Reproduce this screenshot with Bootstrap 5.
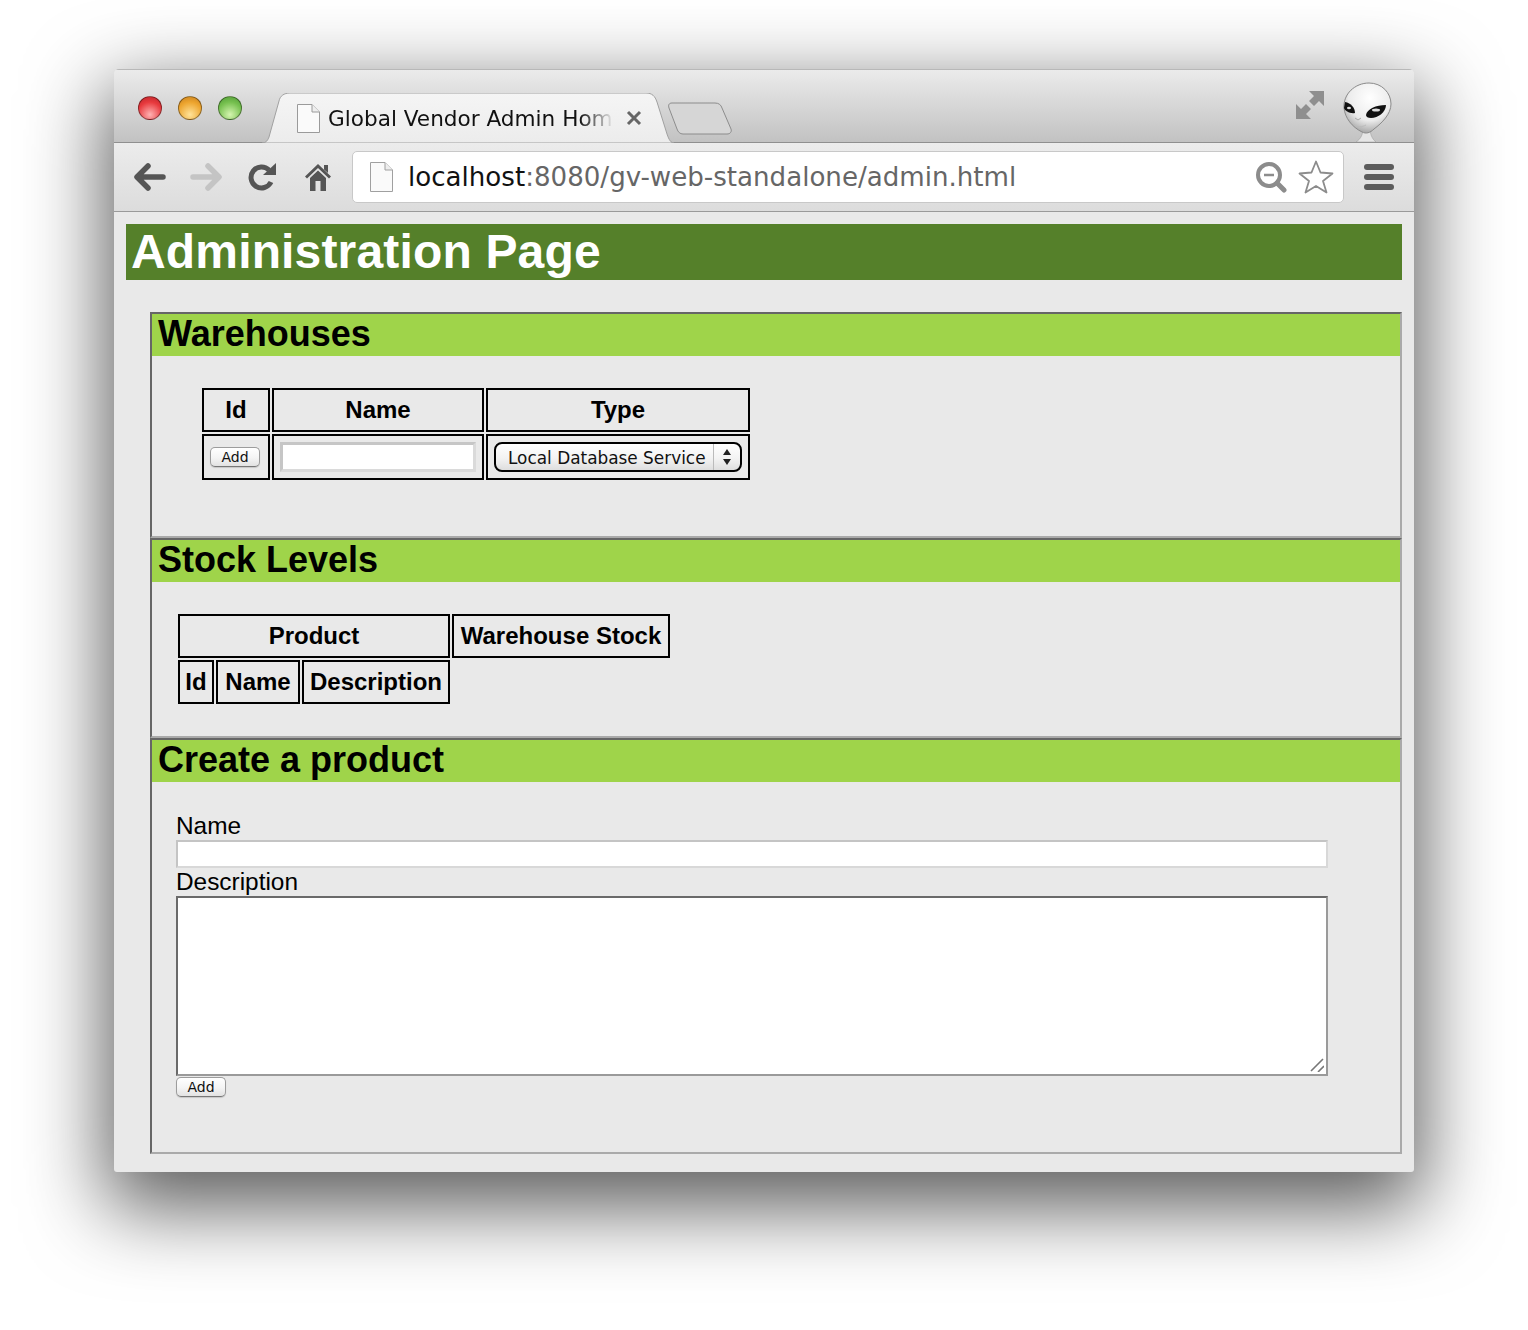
<!DOCTYPE html>
<html>
<head>
  <title>Administration Page</title>
  <meta charset="UTF-8">
  <link href="https://cdn.jsdelivr.net/npm/bootstrap@5.3.0/dist/css/bootstrap.min.css" rel="stylesheet">
  <style>
    body { background: #fff; margin: 0; height: 1330px; overflow: hidden; font-family: "Liberation Sans", Arial, sans-serif; color: #000; }
    .win { width: 1300px; height: 1103px; margin: 69px 0 0 114px; background: #e9e9e9; border-radius: 5px 5px 3px 3px; box-shadow: 0 28px 80px 8px rgba(0,0,0,.64); overflow: hidden; }
    .chrome-top { height: 74px; padding-left: 24px; background: linear-gradient(#ebebeb, #c2c2c2); border-top: 1px solid #b8b8b8; border-bottom: 1px solid #8f8f8f; }
    .dot { width: 24px; height: 24px; border-radius: 50%; margin: 26px 16px 0 0; border: 1px solid rgba(0,0,0,.4); }
    .dot-r { background: radial-gradient(circle at 50% 80%, #ffb3b3, #e83a3e 60%, #b92328); }
    .dot-y { background: radial-gradient(circle at 50% 80%, #ffe39a, #eda52f 60%, #c77f1d); }
    .dot-g { background: radial-gradient(circle at 50% 80%, #d5f5b0, #76c04f 60%, #4f9a35); }
    .tab-wrap { width: 412px; height: 50px; margin: 23px 0 0 4px; }
    .tab-shape { left: 0; top: 0; }
    .tab-inner { padding-left: 35px; height: 50px; }
    .tab-title { width: 286px; margin-left: 8px; overflow: hidden; white-space: nowrap; font: 21.6px "DejaVu Sans", sans-serif; color: #111; -webkit-mask-image: linear-gradient(to right, #000 88%, transparent 100%); mask-image: linear-gradient(to right, #000 88%, transparent 100%); }
    .tab-x { margin-left: 12px; }
    .newtab { margin: 32px 0 0 -7px; }
    .top-right { margin-left: auto; padding-right: 21px; }
    .resize-ico { margin: 21px 19px 0 0; }
    .alien { margin-top: 12px; }
    .chrome-bar { height: 69px; padding-left: 8px; background: linear-gradient(#ececec, #dcdcdc); border-bottom: 1px solid #9a9a9a; }
    .tool-slot { width: 56px; }
    .addr { width: 992px; height: 52px; margin-left: 6px; background: #fff; border: 1px solid #c8c8c8; border-radius: 5px; padding: 0 9px 0 17px; }
    .addr-url { font: 26.1px "DejaVu Sans", sans-serif; margin-left: 15px; color: #666; white-space: nowrap; }
    .addr-url b { font-weight: normal; color: #111; }
    .star-ico { margin-left: 11px; }
    .menu-ico { margin-left: 20px; }
    .page { padding: 12px 12px 0; }
    .page-head { height: 56px; margin: 0 0 32px; padding-left: 5px; background: #55802a; color: #fff; letter-spacing: .16px; font: bold 48px/56px "Liberation Sans", Arial, sans-serif; }
    .block { margin-left: 24px; border: 2px solid; border-color: #666 #aaa #aaa #666; }
    .block-head { height: 42px; margin: 0; padding-left: 6px; background: #9fd44a; font: bold 36px/40px "Liberation Sans", Arial, sans-serif; }
    .wh-body { height: 180px; padding: 30px 0 0 48px; }
    .st-body { height: 154px; padding: 30px 0 0 24px; }
    .cr-body { height: 370px; padding: 30px 0 0 24px; }
    .grid-tbl { border-collapse: separate; border-spacing: 2px; table-layout: fixed; }
    .grid-tbl th, .grid-tbl td { border: 2px solid #000; text-align: center; font: bold 24px "Liberation Sans", Arial, sans-serif; padding: 0; height: 44px; }
    .grid-tbl td { height: 46px; }
    .c68 { width: 68px; } .c212 { width: 212px; } .c264 { width: 264px; }
    .c36 { width: 36px; } .c84 { width: 84px; } .c148 { width: 148px; } .c218 { width: 218px; }
    .mac-btn { display: block; width: 50px; height: 20px; padding: 0 0 1px; background: linear-gradient(#fff, #f4f4f4 55%, #e2e2e2); border: 1px solid #9c9c9c; border-bottom-color: #777; border-radius: 5px; font: 14px/18px "DejaVu Sans", sans-serif; color: #111; box-shadow: 0 1px 1px rgba(0,0,0,.15); }
    .wh-btn { margin: 0 0 0 6px; }
    .wh-input { display: block; width: 196px; height: 30px; margin: 0 auto; padding: 0 3px; background: #fff; border: 3px solid #d2d2d2; border-color: #c6c6c6 #dadada #dadada #c6c6c6; }
    .sel-box { width: 248px; height: 30px; margin: 0 auto; }
    .sel-real { display: block; width: 248px; height: 30px; padding: 1px 0 0 12px; -webkit-appearance: none; appearance: none; border: 2px solid #000; border-radius: 8px; font: 16.9px/26px "DejaVu Sans", sans-serif; color: #111; background: linear-gradient(to right, transparent 217px, #bbb 217px, #bbb 218px, transparent 218px), linear-gradient(#fff, #f3f3f3 55%, #dedede); }
    .sel-arrows { right: 10px; top: 7px; pointer-events: none; }
    .fld-label { display: block; height: 28px; margin: 0; font: 24.4px/28px "Liberation Sans", Arial, sans-serif; }
    .fld-input { display: block; width: 1152px; height: 28px; padding: 0 3px; background: #fff; border: 2px solid #d0d0d0; border-color: #c4c4c4 #d8d8d8 #d8d8d8 #c4c4c4; }
    .area-box { width: 1152px; height: 180px; }
    .fld-area { display: block; width: 1152px; height: 180px; padding: 2px; resize: none; background: #fff; border: 2px solid #808080; border-color: #6a6a6a #9a9a9a #9a9a9a #6a6a6a; }
    .grip { right: 4px; bottom: 4px; pointer-events: none; }
    .add-btn { margin-top: 1px; }
  </style>
</head>
<body>

<div class="win">
  <div class="chrome-top d-flex">
    <div class="dot dot-r"></div>
    <div class="dot dot-y"></div>
    <div class="dot dot-g"></div>
    <div class="tab-wrap position-relative">
      <svg class="tab-shape position-absolute" width="412" height="50" viewBox="0 0 412 50">
        <defs><linearGradient id="tabg" x1="0" y1="0" x2="0" y2="1"><stop offset="0" stop-color="#f5f5f5"/><stop offset="1" stop-color="#ececec"/></linearGradient></defs>
        <path d="M0 50 C4 50 6 47 7 44 L17 8 C18 3 22 0 28 0 H384 C390 0 393 3 395 9 L405 41 C407 47 409 50 412 50 Z" fill="url(#tabg)" stroke="#a0a0a0"/>
      </svg>
      <div class="tab-inner d-flex align-items-center position-relative">
        <svg width="23" height="29" viewBox="0 0 23 29"><path d="M.5.5H15L22.500 8V28.500H.5Z" fill="#fafafa" stroke="#9a9a9a"/><path d="M15 .5V8H22.500" fill="#eee" stroke="#9a9a9a"/></svg>
        <div class="tab-title">Global Vendor Admin Hom</div>
        <svg class="tab-x" width="16" height="16" viewBox="0 0 16 16"><path d="M2 2L14 14M14 2L2 14" stroke="#666" stroke-width="3"/></svg>
      </div>
    </div>
    <svg class="newtab" width="66" height="33" viewBox="0 0 66 33"><path d="M5 1H48C52 1 54 3 55 6L64 27C65 30 63 32 60 32H16C13 32 11 30 10 27L2 6C1 3 2 1 5 1Z" fill="#d6d6d6" stroke="#8c8c8c"/></svg>
    <div class="top-right d-flex align-items-start">
      <svg class="resize-ico" width="28" height="28" viewBox="0 0 28 28" fill="#8f8f8f"><path d="M13 0H28V15L23 10L18 15L13 10L18 5Z"/><path d="M0 13L5 18L10 13L15 18L10 23L15 28H0Z"/></svg>
      <svg class="alien" width="50" height="60" viewBox="0 0 50 60">
        <defs><radialGradient id="hd" cx=".55" cy=".3" r=".75"><stop offset="0" stop-color="#fff"/><stop offset=".6" stop-color="#ececec"/><stop offset="1" stop-color="#9a9a9a"/></radialGradient></defs>
        <path d="M20 46C20 52 18 57 13 60H33C29 57 27 52 27 46Z" fill="#e6e6e6" stroke="#999" stroke-width=".5"/>
        <path d="M26 1C39 1 48 11 48 22C48 32 39 41 31 47C27 51 23 52 19 50C9 45 2 36 1 26C0 12 12 1 26 1Z" fill="url(#hd)" stroke="#8a8a8a"/>
        <path d="M2 20C8 21 12 26 12 31C7 32 2 29 1 26Z" fill="#111"/>
        <path d="M23 33C24 27 33 23 43 23C43 30 35 36 28 36C25 36 23 35 23 33Z" fill="#111"/>
        <ellipse cx="33" cy="28" rx="4" ry="1.500" fill="#ddd"/>
        <ellipse cx="6" cy="26" rx="2" ry="1.200" fill="#ddd"/>
        <path d="M12 36L15 38L18 36" fill="none" stroke="#aaa"/>
        <path d="M11 43C14 46 19 45 23 43" fill="none" stroke="#bbb"/>
      </svg>
    </div>
  </div>

  <div class="chrome-bar d-flex align-items-center">
    <div class="tool-slot d-flex justify-content-center">
      <svg width="32" height="28" viewBox="0 0 32 28"><path d="M14 3L3 14L14 25M4 14H29" fill="none" stroke="#555" stroke-width="5.500" stroke-linecap="round" stroke-linejoin="round"/></svg>
    </div>
    <div class="tool-slot d-flex justify-content-center">
      <svg width="32" height="28" viewBox="0 0 32 28"><path d="M18 3L29 14L18 25M28 14H3" fill="none" stroke="#c4c4c4" stroke-width="5.500" stroke-linecap="round" stroke-linejoin="round"/></svg>
    </div>
    <div class="tool-slot d-flex justify-content-center">
      <svg width="30" height="28" viewBox="0 0 30 28"><path d="M24 19A10.500 10.500 0 1 1 22 7" fill="none" stroke="#555" stroke-width="5"/><path d="M16 12H29V0Z" fill="#555"/></svg>
    </div>
    <div class="tool-slot d-flex justify-content-center">
      <svg width="26" height="27" viewBox="0 0 26 27" fill="#555"><path d="M13 0L26 12.500L24 14.500L13 4L2 14.500L0 12.500Z"/><path d="M19 1H23V9L19 5.500Z"/><path d="M5 14L13 6.500L21 14V27H15.500V17H10.500V27H5Z"/></svg>
    </div>
    <div class="addr d-flex align-items-center">
      <svg width="23" height="30" viewBox="0 0 23 30"><path d="M.5.5H15L22.500 8V29.500H.5Z" fill="#fafafa" stroke="#a0a0a0"/><path d="M15 .5V8H22.500" fill="#eee" stroke="#a0a0a0"/></svg>
      <div class="addr-url flex-grow-1"><b>localhost</b>:8080/gv-web-standalone/admin.html</div>
      <svg width="32" height="32" viewBox="0 0 32 32"><circle cx="14" cy="14" r="11" fill="none" stroke="#8c8c8c" stroke-width="4"/><path d="M9 14H19" stroke="#8c8c8c" stroke-width="2.500"/><path d="M22 22L29 29" stroke="#8c8c8c" stroke-width="5" stroke-linecap="round"/></svg>
      <svg class="star-ico" width="36" height="34" viewBox="0 0 36 34"><path d="M18 1.500L22.500 12.500L34.500 13.500L25 21L28.500 32.500L18 26L7.500 32.500L11 21L1.500 13.500L13.500 12.500Z" fill="#fff" stroke="#8c8c8c" stroke-width="1.800" stroke-linejoin="round"/></svg>
    </div>
    <svg class="menu-ico" width="30" height="26" viewBox="0 0 30 26" fill="#5c5c5c"><rect y="0" width="30" height="6" rx="3"/><rect y="10" width="30" height="6" rx="3"/><rect y="20" width="30" height="6" rx="3"/></svg>
  </div>

  <div class="page">
    <h1 class="page-head">Administration Page</h1>

    <div class="block">
      <h2 class="block-head">Warehouses</h2>
      <div class="wh-body">
        <table class="grid-tbl">
          <colgroup><col class="c68"><col class="c212"><col class="c264"></colgroup>
          <tr><th>Id</th><th>Name</th><th>Type</th></tr>
          <tr>
            <td><button type="button" class="mac-btn wh-btn">Add</button></td>
            <td><input type="text" class="wh-input"></td>
            <td>
              <div class="sel-box position-relative">
                <select class="sel-real"><option>Local Database Service</option></select>
                <svg class="sel-arrows position-absolute" width="10" height="16" viewBox="0 0 10 16" fill="#222"><path d="M5 0L9 6H1Z"/><path d="M5 16L1 10H9Z"/></svg>
              </div>
            </td>
          </tr>
        </table>
      </div>
    </div>

    <div class="block">
      <h2 class="block-head">Stock Levels</h2>
      <div class="st-body">
        <table class="grid-tbl">
          <colgroup><col class="c36"><col class="c84"><col class="c148"><col class="c218"></colgroup>
          <tr><th colspan="3">Product</th><th>Warehouse Stock</th></tr>
          <tr><th>Id</th><th>Name</th><th>Description</th></tr>
        </table>
      </div>
    </div>

    <div class="block">
      <h2 class="block-head">Create a product</h2>
      <div class="cr-body">
        <label class="fld-label">Name</label>
        <input type="text" class="fld-input">
        <label class="fld-label">Description</label>
        <div class="area-box position-relative">
          <textarea class="fld-area"></textarea>
          <svg class="grip position-absolute" width="14" height="14" viewBox="0 0 14 14"><path d="M1 13L13 1M8 14L14 8" stroke="#777" stroke-width="1.600"/></svg>
        </div>
        <button type="button" class="mac-btn add-btn">Add</button>
      </div>
    </div>
  </div>
</div>

<script src="https://cdn.jsdelivr.net/npm/bootstrap@5.3.0/dist/js/bootstrap.bundle.min.js"></script>
</body>
</html>
